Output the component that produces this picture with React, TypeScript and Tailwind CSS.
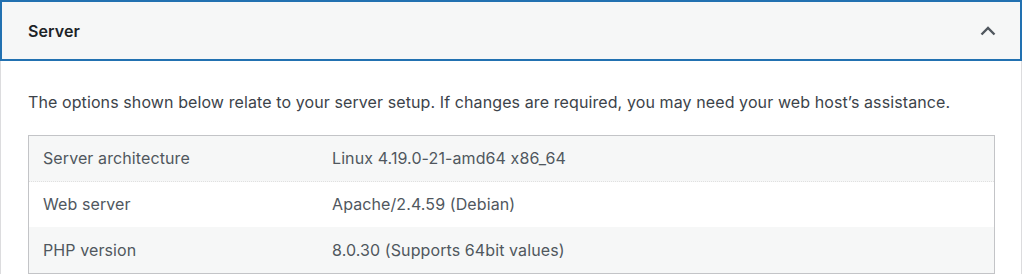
const rows = [
  { label: "Server architecture", value: "Linux 4.19.0-21-amd64 x86_64" },
  { label: "Web server", value: "Apache/2.4.59 (Debian)" },
  { label: "PHP version", value: "8.0.30 (Supports 64bit values)" },
];

export default function App() {
  return (
    <div className="w-[1024px] h-[274px] bg-white overflow-hidden font-['Inter',sans-serif] text-[16px] tracking-[0.1px] [font-feature-settings:'calt'_0]">
      <div className="w-[1022px] border-x border-[#dcdcde] h-[274px]">
        <button className="-mx-px w-[1022px] h-[61px] flex items-center justify-between border-2 border-[#2271b1] bg-[#f6f7f7] pl-[26px] pr-[24px] text-left">
          <span className="font-semibold text-[#1d2327]">Server</span>
          <svg width="16" height="10" viewBox="0 0 16 10" fill="none" className="text-[#50575e]">
            <path d="M1.5 8.5 L8 2 L14.5 8.5" stroke="currentColor" strokeWidth="2.4" />
          </svg>
        </button>
        <div className="pl-[27px] pr-[26px] pt-[30px]">
          <p className="text-[#3c434a] leading-[22px]">
            The options shown below relate to your server setup. If changes are required, you may need your web host’s assistance.
          </p>
          <div className="mt-[22px] border border-[#c3c4c7]">
            {rows.map((r, i) => (
              <div
                key={r.label}
                className={`flex items-center h-[45.5px] text-[#50575e] ${i % 2 === 0 ? "bg-[#f6f7f7]" : "bg-white"} ${i === 0 ? "border-b border-dotted border-[#e0e0e0]" : ""}`}
              >
                <div className="w-[303px] pl-[14px]">{r.label}</div>
                <div>{r.value}</div>
              </div>
            ))}
          </div>
        </div>
      </div>
    </div>
  );
}
